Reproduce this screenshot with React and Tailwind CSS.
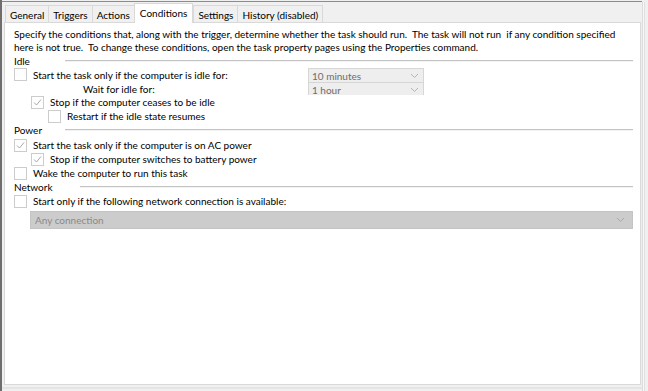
import React from "react";

const font = { fontFamily: 'Lato, "Noto Sans", sans-serif' };

function Box({ checked }) {
  return (
    <span className="inline-flex w-[13px] h-[13px] shrink-0 items-center justify-center border border-[#cccccc] bg-white">
      {checked && (
        <svg width="9" height="9" viewBox="0 0 9 9">
          <path d="M1 4.5 L3.5 7 L8 1.5" fill="none" stroke="#a8a8a8" strokeWidth="1" />
        </svg>
      )}
    </span>
  );
}

function Check({ checked, indent = 0, label }) {
  return (
    <div className="flex items-center h-[14px]" style={{ paddingLeft: indent }}>
      <Box checked={checked} />
      <span className="ml-[6px] whitespace-nowrap">{label}</span>
    </div>
  );
}

function Group({ title, width }) {
  return (
    <div className="flex items-center h-[14px]">
      <span className="shrink-0" style={{ width }}>{title}</span>
      <div className="flex-1 h-[2px] border-t border-[#c4c4c4] border-b border-b-[#f2f2f2]" />
    </div>
  );
}

function Select({ value }) {
  return (
    <div className="w-[116px] h-[15px] flex items-center justify-between border border-[#d6d6d6] bg-[#eeeeee] pl-[3px] pr-[4px] text-[#6d6d6d] overflow-hidden">
      <span>{value}</span>
      <svg width="9" height="6" viewBox="0 0 9 6">
        <path d="M1 1 L4.5 4.5 L8 1" fill="none" stroke="#b4b4b4" strokeWidth="1" />
      </svg>
    </div>
  );
}

const tabs = ["General", "Triggers", "Actions", "Conditions", "Settings", "History (disabled)"];

export default function App() {
  return (
    <div className="w-[648px] h-[391px] bg-[#f0f0f0] flex text-[10px] leading-[14px] text-black overflow-hidden" style={font}>
      <div className="w-[2px] h-full bg-[#6e6e6e]" />
      <div className="w-[640px] flex flex-col">
        <div className="h-[1px] mt-[1px] bg-[#8c8c8c]" />
        <div className="flex items-end h-[20px] pl-[3px]">
          {tabs.map((t) =>
            t === "Conditions" ? (
              <div key={t} className="h-[20px] px-[5px] bg-white border border-b-0 border-[#d9d9d9] -mb-[1px] relative z-10 pt-[2px]">
                {t}
              </div>
            ) : (
              <div key={t} className="h-[17px] px-[4px] pt-[2px] border border-b-0 border-r-0 last:border-r border-[#d9d9d9] bg-[#f0f0f0]">
                {t}
              </div>
            )
          )}
        </div>
        <div className="ml-[2px] w-[637px] h-[363px] bg-white border border-[#d9d9d9] pl-[9px] pt-[5px] pr-[7px]">
          <p className="leading-[13px] whitespace-nowrap">
            Specify the conditions that, along with the trigger, determine whether the task should run.&nbsp; The task will not run&nbsp; if any condition specified
            <br />
            here is not true.&nbsp; To change these conditions, open the task property pages using the Properties command.
          </p>
          <Group title="Idle" width={51} />
          <div className="flex items-center h-[13px]">
            <div className="w-[294px]">
              <Check label="Start the task only if the computer is idle for:" />
            </div>
            <div className="mt-[2px]"><Select value="10 minutes" /></div>
          </div>
          <div className="flex items-start h-[14px]">
            <div className="w-[294px] pl-[69px] pt-[1px]">Wait for idle for:</div>
            <div className="h-[13px] mt-[1px] overflow-hidden"><Select value="1 hour" /></div>
          </div>
          <Check checked indent={17} label="Stop if the computer ceases to be idle" />
          <Check indent={34} label="Restart if the idle state resumes" />
          <Group title="Power" width={51} />
          <div className="mt-[1px]">
            <Check checked label="Start the task only if the computer is on AC power" />
          </div>
          <Check checked indent={17} label="Stop if the computer switches to battery power" />
          <Check label="Wake the computer to run this task" />
          <Group title="Network" width={66} />
          <Check label="Start only if the following network connection is available:" />
          <div className="ml-[16px] mt-[3px] h-[18px] flex items-center justify-between border border-[#c4c4c4] bg-[#cccccc] pl-[4px] pr-[7px] text-[#8a8a8a]">
            <span>Any connection</span>
            <svg width="9" height="6" viewBox="0 0 9 6">
              <path d="M1 1 L4.5 4.5 L8 1" fill="none" stroke="#a8a8a8" strokeWidth="1" />
            </svg>
          </div>
        </div>
        <div className="h-[2px] mt-[2px] bg-[#e4e4e4]" />
      </div>
      <div className="w-[1px] mt-[2px] bg-[#dcdcdc]" />
      <div className="w-[1px] mt-[2px] bg-[#f8f8f8]" />
      <div className="w-[1px] mt-[2px] bg-[#e0e0e0]" />
    </div>
  );
}
